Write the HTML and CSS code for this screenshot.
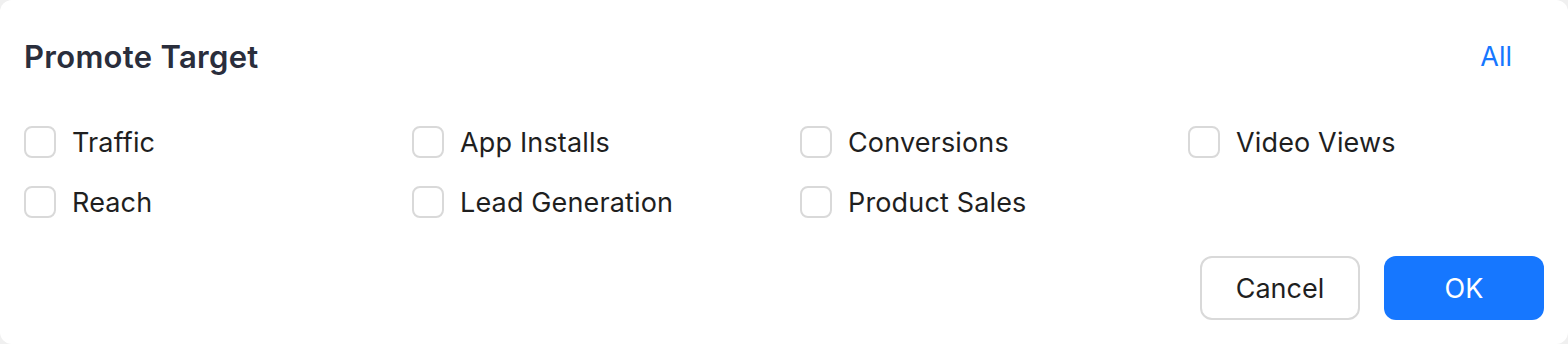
FILE: index.html
```html
<!DOCTYPE html>
<html lang="en">
<head>
<meta charset="utf-8">
<title>Promote Target</title>
<link rel="stylesheet" href="styles.css">
</head>
<body>
<div class="card">
  <div class="header">
    <h1 class="title">Promote Target</h1>
    <a class="all" href="#">All</a>
  </div>
  <div class="grid">
    <label class="option"><span class="box"></span><span class="text">Traffic</span></label>
    <label class="option"><span class="box"></span><span class="text">App Installs</span></label>
    <label class="option"><span class="box"></span><span class="text">Conversions</span></label>
    <label class="option"><span class="box"></span><span class="text">Video Views</span></label>
    <label class="option"><span class="box"></span><span class="text">Reach</span></label>
    <label class="option"><span class="box"></span><span class="text">Lead Generation</span></label>
    <label class="option"><span class="box"></span><span class="text">Product Sales</span></label>
  </div>
  <div class="footer">
    <button class="btn btn-default">Cancel</button>
    <button class="btn btn-primary">OK</button>
  </div>
</div>
</body>
</html>
```
FILE: styles.css
```css
* { box-sizing: border-box; }
html, body { margin: 0; padding: 0; }
body {
  background: #f0f0f0;
  font-family: Inter, "Noto Sans", sans-serif;
  width: 1568px;
  height: 344px;
}
.card {
  background: #fff;
  border-radius: 12px;
  width: 1568px;
  height: 344px;
  padding: 24px;
  display: flex;
  flex-direction: column;
}
.header {
  height: 66px;
  display: flex;
  align-items: center;
  justify-content: space-between;
  padding-right: 32px;
  padding-bottom: 2px;
}
.title {
  margin: 0;
  font-size: 31px;
  font-weight: 600;
  color: #2a2e3c;
  letter-spacing: 0.3px;
}
.all {
  font-size: 27px;
  color: #1677ff;
  text-decoration: none;
}
.grid {
  margin-top: 22px;
  display: grid;
  grid-template-columns: repeat(4, 356px);
  column-gap: 32px;
  grid-auto-rows: 60px;
}
.option {
  display: flex;
  align-items: center;
}
.box {
  width: 32px;
  height: 32px;
  border: 2px solid #d9d9d9;
  border-radius: 8px;
  background: #fff;
  flex: none;
}
.text {
  margin-left: 16px;
  font-size: 27px;
  color: #1f1f1f;
  letter-spacing: 0.15px;
}
.footer {
  margin-top: 24px;
  display: flex;
  justify-content: flex-end;
  gap: 24px;
}
.btn {
  width: 160px;
  height: 64px;
  border-radius: 12px;
  font-family: Inter, "Noto Sans", sans-serif;
  font-size: 27px;
  cursor: pointer;
}
.btn-default {
  background: #fff;
  border: 2px solid #d9d9d9;
  color: #1f1f1f;
}
.btn-primary {
  background: #1677ff;
  border: none;
  color: #fff;
}
```
